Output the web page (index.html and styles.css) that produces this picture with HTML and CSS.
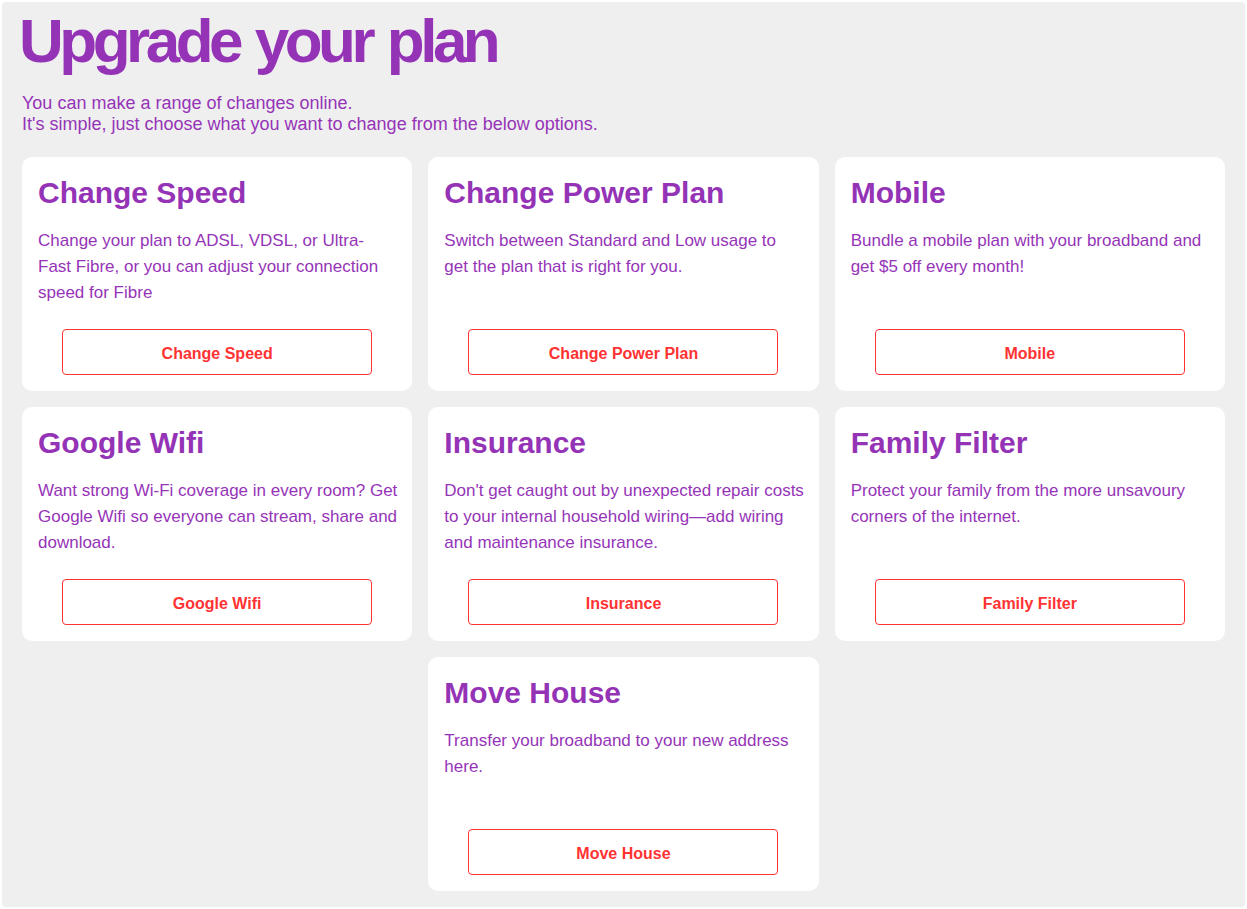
FILE: index.html
```html
<!DOCTYPE html>
<html lang="en">
<head>
  <meta charset="UTF-8">
  <meta name="viewport" content="width=device-width, initial-scale=1.0">
  <title>Upgrade your plan</title>
  <link rel="stylesheet" href="styles.css">
</head>
<body>
  <div class="page">
    <h1>Upgrade your plan</h1>
    <p class="intro">You can make a range of changes online.<br>It's simple, just choose what you want to change from the below options.</p>

    <div class="grid">
      <div class="card">
        <h2>Change Speed</h2>
        <p>Change your plan to ADSL, VDSL, or Ultra-Fast Fibre, or you can adjust your connection speed for Fibre</p>
        <button>Change Speed</button>
      </div>
      <div class="card">
        <h2>Change Power Plan</h2>
        <p>Switch between Standard and Low usage to get the plan that is right for you.</p>
        <button>Change Power Plan</button>
      </div>
      <div class="card">
        <h2>Mobile</h2>
        <p>Bundle a mobile plan with your broadband and get $5 off every month!</p>
        <button>Mobile</button>
      </div>
      <div class="card">
        <h2>Google Wifi</h2>
        <p class="wide">Want strong Wi-Fi coverage in every room? Get Google Wifi so everyone can stream, share and download.</p>
        <button>Google Wifi</button>
      </div>
      <div class="card">
        <h2>Insurance</h2>
        <p class="wide">Don't get caught out by unexpected repair costs to your internal household wiring—add wiring and maintenance insurance.</p>
        <button>Insurance</button>
      </div>
      <div class="card">
        <h2>Family Filter</h2>
        <p>Protect your family from the more unsavoury corners of the internet.</p>
        <button>Family Filter</button>
      </div>
      <div class="card center">
        <h2>Move House</h2>
        <p>Transfer your broadband to your new address here.</p>
        <button>Move House</button>
      </div>
    </div>
  </div>
</body>
</html>
```

FILE: styles.css
```css
body { margin: 2px; background: #fff; font-family: "Liberation Sans", Arial, sans-serif; color: #9634b8; }
.page { background: #efefef; border-radius: 4px; padding: 7px 20px 16px; }
h1 { margin: 0 0 0 -3px; font-size: 62px; line-height: 64px; letter-spacing: -4.5px; word-spacing: 3px; font-weight: bold; color: #9433b6; }
.intro { margin: 20px 0 0; font-size: 18px; line-height: 21px; }
.grid { margin-top: 22px; display: grid; grid-template-columns: repeat(3, 1fr); gap: 16px; }
.card { background: #fff; border-radius: 10px; padding: 16px; display: flex; flex-direction: column; }
.card.center { grid-column: 2; }
.card h2 { margin: 0; font-size: 30px; line-height: 40px; color: #9433b6; }
.card p { margin: 15px 0 23px; font-size: 17px; line-height: 26px; min-height: 78px; }
.card p.wide { margin-right: -2px; }
.card button { margin-top: auto; align-self: center; width: 310px; height: 46px; padding: 4px 0 0; background: #fff; border: 1px solid #ff3333; border-radius: 4px; color: #ff3333; font-family: inherit; font-size: 16px; font-weight: bold; cursor: pointer; }
```
